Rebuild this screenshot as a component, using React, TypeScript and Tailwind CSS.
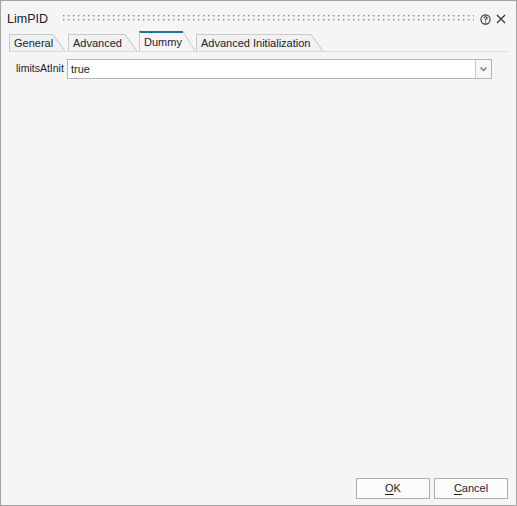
import type { ReactNode } from 'react';

const font = { fontFamily: '"Liberation Sans", Arial, sans-serif' };

function Tab({ label, active, width }: { label: string; active?: boolean; width: string }) {
  return (
    <div className={`relative flex shrink-0 ${active ? 'h-[20px]' : 'h-[17px]'}`}>
      <div
        className={`flex items-center whitespace-nowrap border-l border-[#c9c9c9] pl-[4px] ${width} ${
          active ? 'border-t-2 border-t-[#1f6f9f] bg-[#f5f5f5]' : 'border-t border-t-[#c9c9c9] bg-[#f1f1f1]'
        }`}
      >
        <span className="text-[11px] leading-none text-[#1b1b2f]">{label}</span>
      </div>
      <svg width="12" height="100%" className="block shrink-0" viewBox="0 0 12 20" preserveAspectRatio="none">
        <polygon points="0,0 0,20 12,20" fill={active ? '#f5f5f5' : '#f1f1f1'} />
        <line x1="0" y1="0.5" x2="12" y2="20" stroke="#c9c9c9" strokeWidth="1" vectorEffect="non-scaling-stroke" />
      </svg>
    </div>
  );
}

function Button({ children }: { children: ReactNode }) {
  return (
    <button
      type="button"
      className="flex h-[21px] w-[74px] items-center justify-center border border-[#adadad] bg-[#fbfbfb] text-[11px] text-[#1b1b2f]"
    >
      {children}
    </button>
  );
}

export default function App() {
  return (
    <div style={font} className="flex h-[506px] w-[517px] flex-col border border-[#a3a3a3] bg-[#f5f5f5]">
      {/* title bar */}
      <div className="flex h-[30px] items-center pl-[6px] pr-[10px] pt-[6px]">
        <span className="text-[12.5px] leading-none text-[#1b1b2f]">LimPID</span>
        <svg className="ml-[15px] mr-[6px] h-[10px] flex-1" aria-hidden>
          <defs>
            <pattern id="grip" width="5" height="4" patternUnits="userSpaceOnUse">
              <rect x="0" y="1" width="1.4" height="1.4" fill="#8a8a8a" />
            </pattern>
          </defs>
          <rect x="0" y="0" width="100%" height="8" fill="url(#grip)" />
        </svg>
        <svg width="11" height="11" viewBox="0 0 11 11" className="mr-[5px]">
          <circle cx="5.5" cy="5.5" r="4.6" fill="none" stroke="#333" strokeWidth="1.1" />
          <path d="M3.9 4.3 Q3.9 2.8 5.5 2.8 Q7.1 2.8 7.1 4.1 Q7.1 5 5.5 5.5 L5.5 6.5" fill="none" stroke="#333" strokeWidth="1.1" />
          <rect x="5" y="7.4" width="1.1" height="1.1" fill="#333" />
        </svg>
        <svg width="10" height="10" viewBox="0 0 10 10">
          <path d="M1 1 L9 9 M9 1 L1 9" stroke="#333" strokeWidth="1.2" />
        </svg>
      </div>

      {/* tabs */}
      <div className="ml-[8px] mr-[8px] flex items-end border-b border-[#dcdcdc]">
        <Tab label="General" width="w-[44px]" />
        <div className="w-[3px]" />
        <Tab label="Advanced" width="w-[57px]" />
        <div className="w-[2px]" />
        <Tab label="Dummy" active width="w-[44px]" />
        <div className="w-[1px]" />
        <Tab label="Advanced Initialization" width="w-[115px]" />
      </div>

      {/* content */}
      <div className="flex flex-1 flex-col pl-[15px] pr-[14px] pt-[7px]">
        <div className="flex items-center">
          <span className="w-[51px] whitespace-nowrap text-[10.5px] text-[#1b1b2f]">limitsAtInit</span>
          <div className="flex h-[20px] w-[425px] border border-[#b4b4b4] bg-white">
            <span className="flex flex-1 items-center pl-[3px] text-[11px] text-[#1b1b2f]">true</span>
            <div className="flex w-[16px] items-center justify-center border-l border-[#c8c8c8] bg-[#f7f7f7]">
              <svg width="7" height="5" viewBox="0 0 7 5">
                <path d="M0.5 0.5 L3.5 3.5 L6.5 0.5" fill="none" stroke="#808080" strokeWidth="1.5" />
              </svg>
            </div>
          </div>
        </div>
      </div>

      {/* footer */}
      <div className="flex justify-end gap-[4px] pb-[6px] pr-[8px]">
        <Button>
          <span className="underline underline-offset-2">O</span>K
        </Button>
        <Button>
          <span className="underline underline-offset-2">C</span>ancel
        </Button>
      </div>
    </div>
  );
}
